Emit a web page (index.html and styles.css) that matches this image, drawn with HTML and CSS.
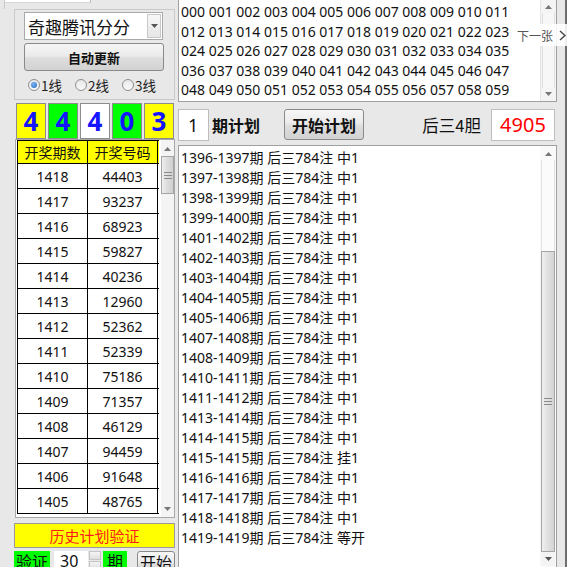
FILE: index.html
```html
<!DOCTYPE html>
<html>
<head>
<meta charset="utf-8">
<link rel="stylesheet" href="styles.css">
</head>
<body>
<div class="app">
  <div class="left">
    <div class="tabstrip"><div class="tab"></div></div>
    <div class="group">
      <div class="combo">
        <span class="combo-text">奇趣腾讯分分</span>
        <span class="combo-btn"><svg width="7" height="4" viewBox="0 0 7 4"><path d="M0 0H7L3.5 4Z" fill="#555"/></svg></span>
      </div>
      <div class="btn btn-auto">自动更新</div>
      <div class="radios">
        <span class="radio"><span class="dot on"></span>1线</span>
        <span class="radio"><span class="dot"></span>2线</span>
        <span class="radio"><span class="dot"></span>3线</span>
      </div>
    </div>
    <div class="digits">
      <div class="digit yellow">4</div>
      <div class="digit green">4</div>
      <div class="digit white">4</div>
      <div class="digit green">0</div>
      <div class="digit yellow">3</div>
    </div>
    <div class="tablebox">
      <div class="table">
        <div class="trow head"><div class="c1">开奖期数</div><div class="c2">开奖号码</div></div>
        <div class="trow"><div class="c1">1418</div><div class="c2">44403</div></div>
        <div class="trow"><div class="c1">1417</div><div class="c2">93237</div></div>
        <div class="trow"><div class="c1">1416</div><div class="c2">68923</div></div>
        <div class="trow"><div class="c1">1415</div><div class="c2">59827</div></div>
        <div class="trow"><div class="c1">1414</div><div class="c2">40236</div></div>
        <div class="trow"><div class="c1">1413</div><div class="c2">12960</div></div>
        <div class="trow"><div class="c1">1412</div><div class="c2">52362</div></div>
        <div class="trow"><div class="c1">1411</div><div class="c2">52339</div></div>
        <div class="trow"><div class="c1">1410</div><div class="c2">75186</div></div>
        <div class="trow"><div class="c1">1409</div><div class="c2">71357</div></div>
        <div class="trow"><div class="c1">1408</div><div class="c2">46129</div></div>
        <div class="trow"><div class="c1">1407</div><div class="c2">94459</div></div>
        <div class="trow"><div class="c1">1406</div><div class="c2">91648</div></div>
        <div class="trow"><div class="c1">1405</div><div class="c2">48765</div></div>
      </div>
      <div class="vscroll small">
        <div class="arrow up"><svg width="7" height="4" viewBox="0 0 7 4"><path d="M0 4H7L3.5 0Z" fill="#777"/></svg></div>
        <div class="thumb small-thumb"><span class="grip"></span></div>
        <div class="track"></div>
        <div class="arrow down"><svg width="7" height="4" viewBox="0 0 7 4"><path d="M0 0H7L3.5 4Z" fill="#777"/></svg></div>
      </div>
    </div>
    <div class="history">历史计划验证</div>
    <div class="bottomrow">
      <div class="greenlabel g1">验证</div>
      <div class="numinput">30</div>
      <div class="spin"><span class="sp"></span><span class="sp"></span></div>
      <div class="greenlabel g2">期</div>
      <div class="btn btn-start">开始</div>
    </div>
  </div>

  <div class="right">
    <div class="textbox">
      <div class="numbers">
        <div>000 001 002 003 004 005 006 007 008 009 010 011</div>
        <div>012 013 014 015 016 017 018 019 020 021 022 023</div>
        <div>024 025 026 027 028 029 030 031 032 033 034 035</div>
        <div>036 037 038 039 040 041 042 043 044 045 046 047</div>
        <div>048 049 050 051 052 053 054 055 056 057 058 059</div>
      </div>
      <div class="vscroll top">
        <div class="arrow up"><svg width="7" height="4" viewBox="0 0 7 4"><path d="M0 4H7L3.5 0Z" fill="#777"/></svg></div>
        <div class="track full"></div>
        <div class="arrow down"><svg width="7" height="4" viewBox="0 0 7 4"><path d="M0 0H7L3.5 4Z" fill="#777"/></svg></div>
      </div>
    </div>
    <div class="controls">
      <div class="periodinput">1</div>
      <div class="plan-label">期计划</div>
      <div class="btn btn-plan">开始计划</div>
      <div class="spacer"></div>
      <div class="dan-label">后三4胆</div>
      <div class="redbox">4905</div>
    </div>
    <div class="listbox">
      <div class="lines">
        <div>1396-1397期 后三784注 中1</div>
        <div>1397-1398期 后三784注 中1</div>
        <div>1398-1399期 后三784注 中1</div>
        <div>1399-1400期 后三784注 中1</div>
        <div>1401-1402期 后三784注 中1</div>
        <div>1402-1403期 后三784注 中1</div>
        <div>1403-1404期 后三784注 中1</div>
        <div>1404-1405期 后三784注 中1</div>
        <div>1405-1406期 后三784注 中1</div>
        <div>1407-1408期 后三784注 中1</div>
        <div>1408-1409期 后三784注 中1</div>
        <div>1410-1411期 后三784注 中1</div>
        <div>1411-1412期 后三784注 中1</div>
        <div>1413-1414期 后三784注 中1</div>
        <div>1414-1415期 后三784注 中1</div>
        <div>1415-1415期 后三784注 挂1</div>
        <div>1416-1416期 后三784注 中1</div>
        <div>1417-1417期 后三784注 中1</div>
        <div>1418-1418期 后三784注 中1</div>
        <div>1419-1419期 后三784注 等开</div>
      </div>
      <div class="vscroll big">
        <div class="arrow up"><svg width="7" height="4" viewBox="0 0 7 4"><path d="M0 4H7L3.5 0Z" fill="#777"/></svg></div>
        <div class="track upper"></div>
        <div class="thumb big-thumb"><span class="grip"></span></div>
        <div class="arrow down"><svg width="7" height="4" viewBox="0 0 7 4"><path d="M0 0H7L3.5 4Z" fill="#555"/></svg></div>
      </div>
    </div>
  </div>

  <div class="edge"></div>

  <div class="nextpic"><span class="nexttext">下一张</span><svg class="chev" width="7" height="11" viewBox="0 0 7 11"><path d="M1 1L6 5.5L1 10" fill="none" stroke="#444" stroke-width="1.4"/></svg></div>
</div>
</body>
</html>
```

FILE: styles.css
```css
* { box-sizing: border-box; }
html, body {
  margin: 0;
  padding: 0;
  width: 567px;
  height: 567px;
  overflow: hidden;
  background: #e8e8e8;
  font-family: "Noto Sans", "Noto Sans CJK SC", sans-serif;
  color: #111;
}
.app {
  position: relative;
  display: flex;
  width: 567px;
  height: 567px;
  overflow: hidden;
}
.left {
  width: 178px;
  flex: none;
  display: flex;
  flex-direction: column;
}
.tabstrip {
  height: 9px;
  flex: none;
  border-left: 1px solid #c8c8c8;
  margin-left: 4px;
}
.tab {
  width: 86px;
  height: 3px;
  background: #fff;
  border-right: 1px solid #b8b8b8;
  border-bottom: 1px solid #d8d8d8;
}
.group {
  margin-left: 14px;
  width: 161px;
  height: 91px;
  border: 1px solid #c9c9c9;
  padding: 2px 0 0 9px;
  flex: none;
}
.combo {
  width: 139px;
  height: 28px;
  background: #fff;
  border: 1px solid #a9a9a9;
  display: flex;
  align-items: center;
  justify-content: space-between;
  padding: 0 1px 0 3px;
}
.combo-text {
  font-size: 17px;
  font-family: "Noto Sans CJK SC", sans-serif;
  line-height: 1;
}
.combo-btn {
  width: 14px;
  height: 24px;
  border: 1px solid #c8c8c8;
  background: linear-gradient(#f7f7f7, #e6e6e6);
  display: flex;
  align-items: center;
  justify-content: center;
}
.btn {
  background: linear-gradient(#f6f6f6 0%, #ebebeb 45%, #dddddd 55%, #d2d2d2 100%);
  border: 1px solid #8a8a8a;
  border-radius: 3px;
  display: flex;
  align-items: center;
  justify-content: center;
  font-family: "Noto Sans CJK SC", sans-serif;
  font-weight: bold;
  color: #111;
}
.btn-auto {
  margin-top: 3px;
  width: 140px;
  height: 28px;
  font-size: 13px;
}
.radios {
  margin-top: 6px;
  display: flex;
  height: 16px;
  align-items: center;
  font-size: 13.5px;
  font-family: "Noto Sans CJK SC", sans-serif;
  padding-left: 4px;
}
.radio {
  display: flex;
  align-items: center;
  margin-right: 13px;
  color: #222;
}
.dot {
  width: 12px;
  height: 12px;
  border-radius: 50%;
  border: 1px solid #8e8e8e;
  background: linear-gradient(#e8e8e8, #fafafa);
  margin-right: 1px;
  display: inline-flex;
  align-items: center;
  justify-content: center;
}
.dot.on::after {
  content: "";
  width: 6px;
  height: 6px;
  border-radius: 50%;
  background: radial-gradient(circle at 40% 35%, #7fb4f0, #1e68c8);
}
.digits {
  margin-top: 3px;
  margin-left: 16px;
  display: flex;
  gap: 2px;
  height: 36px;
  flex: none;
}
.digit {
  width: 30px;
  height: 36px;
  border: 1px solid #8c8c8c;
  display: flex;
  align-items: center;
  justify-content: center;
  font-size: 26px;
  font-weight: bold;
  color: #1414ff;
  font-family: "Open Sans", "Noto Sans", sans-serif;
  line-height: 1;
}
.yellow { background: #ffff00; }
.green { background: #00ff00; }
.white { background: #ffffff; }
.tablebox {
  margin-left: 15px;
  width: 160px;
  height: 379px;
  background: #fff;
  border: 1px solid #a8a8a8;
  display: flex;
  flex: none;
  overflow: hidden;
}
.table {
  width: 142px;
  margin-left: 1px;
  flex: none;
}
.trow {
  display: flex;
  height: 25px;
  border-bottom: 1px solid #000;
  font-size: 14px;
}
.trow.head {
  height: 24px;
  background: #ffff00;
  border-top: 1px solid #000;
  font-family: "Noto Sans CJK SC", sans-serif;
}
.c1, .c2 {
  display: flex;
  align-items: center;
  justify-content: center;
  border-left: 1px solid #000;
}
.c1 { width: 70px; }
.c2 { width: 71px; border-right: 1px solid #000; }
.vscroll {
  display: flex;
  flex-direction: column;
  align-items: center;
  background: #f4f4f4;
}
.vscroll.small {
  margin-left: 2px;
  width: 13px;
  padding-top: 3px;
  padding-bottom: 2px;
}
.arrow {
  width: 100%;
  height: 12px;
  display: flex;
  align-items: center;
  justify-content: center;
  flex: none;
}
.thumb {
  width: 100%;
  border: 1px solid #a5a5a5;
  background: linear-gradient(90deg, #eeeeee, #dcdcdc 50%, #cfcfcf);
  display: flex;
  align-items: center;
  justify-content: center;
  flex: none;
}
.small-thumb { height: 38px; margin-top: 1px; }
.grip {
  width: 8px;
  height: 7px;
  border-top: 1px solid #8a8a8a;
  border-bottom: 1px solid #8a8a8a;
}
.grip::after {
  content: "";
  display: block;
  margin-top: 2px;
  border-top: 1px solid #8a8a8a;
}
.track { flex: 1; width: 100%; }
.history {
  margin-top: 5px;
  margin-left: 14px;
  width: 161px;
  height: 25px;
  background: #ffff00;
  border: 1px solid #9a9a9a;
  color: #ff1a1a;
  font-size: 15px;
  font-family: "Noto Sans CJK SC", sans-serif;
  display: flex;
  align-items: center;
  justify-content: center;
  flex: none;
}
.bottomrow {
  margin-top: 3px;
  margin-left: 14px;
  display: flex;
  height: 24px;
  flex: none;
  font-family: "Noto Sans CJK SC", sans-serif;
}
.greenlabel {
  background: #00ff00;
  height: 24px;
  display: flex;
  align-items: center;
  justify-content: center;
  font-size: 16px;
  padding-bottom: 4px;
}
.g1 { width: 36px; }
.g2 { width: 24px; margin-left: 2px; }
.numinput {
  margin-left: 4px;
  width: 34px;
  height: 24px;
  background: #fff;
  font-size: 16px;
  font-family: "Noto Sans", sans-serif;
  padding: 0 0 4px 6px;
  display: flex;
  align-items: center;
}
.spin {
  width: 12px;
  margin-left: 1px;
  display: flex;
  flex-direction: column;
  gap: 1px;
}
.sp {
  height: 9px;
  background: linear-gradient(#f4f4f4, #dedede);
  border: 1px solid #c4c4c4;
}
.btn-start {
  margin-left: 10px;
  width: 38px;
  height: 26px;
  font-weight: normal;
  font-size: 16px;
  padding-bottom: 4px;
}

.right {
  width: 379px;
  flex: none;
  display: flex;
  flex-direction: column;
}
.textbox {
  height: 102px;
  background: #fff;
  border: 1px solid #a0a0a0;
  border-top: none;
  display: flex;
  flex: none;
}
.numbers {
  flex: 1;
  padding: 2px 0 0 2px;
  font-size: 14px;
  line-height: 19.6px;
  white-space: nowrap;
  overflow: hidden;
}
.vscroll.top {
  width: 16px;
  flex: none;
  padding: 1px;
  border-left: 1px solid #e4e4e4;
}
.vscroll.top .track.full {
  border-left: 1px solid #dedede;
  border-right: 1px solid #dedede;
  background: #f7f7f7;
}
.controls {
  height: 43px;
  flex: none;
  display: flex;
  align-items: center;
  padding-top: 2px;
}
.periodinput {
  width: 31px;
  height: 32px;
  background: #fff;
  border: 1px solid #bdbdbd;
  font-size: 18px;
  display: flex;
  align-items: center;
  padding-left: 9px;
}
.plan-label {
  margin-left: 3px;
  font-size: 16px;
  font-weight: bold;
  font-family: "Noto Sans CJK SC", sans-serif;
}
.btn-plan {
  margin-left: 24px;
  width: 80px;
  height: 31px;
  font-size: 16px;
}
.spacer { flex: 1; }
.dan-label {
  font-size: 16.5px;
  font-family: "Noto Sans CJK SC", sans-serif;
  margin-right: 10px;
}
.redbox {
  width: 64px;
  height: 32px;
  background: #fff;
  border: 1px solid #bdbdbd;
  color: #ff0000;
  font-size: 20px;
  display: flex;
  align-items: center;
  justify-content: center;
  margin-right: 2px;
}
.listbox {
  flex: 1;
  background: #fff;
  border: 1px solid #a0a0a0;
  border-bottom: none;
  display: flex;
  overflow: hidden;
}
.lines {
  flex: 1;
  padding: 2px 0 0 2px;
  font-size: 14px;
  line-height: 20px;
  white-space: nowrap;
}
.vscroll.big {
  width: 16px;
  flex: none;
  padding: 2px 1px 0 1px;
  background: #f9f9f9;
}
.vscroll.big .track.upper {
  flex: none;
  height: 91px;
  border-left: 1px solid #e2e2e2;
  border-right: 1px solid #e2e2e2;
  background: #fbfbfb;
}
.big-thumb {
  height: 301px;
  background: linear-gradient(90deg, #f0f0f0, #e0e0e0 50%, #d4d4d4);
}
.vscroll.big .arrow.down { height: 14px; background: #f4f4f4; }
.edge {
  width: 10px;
  flex: none;
  border-right: 2px solid #6e6e6e;
  margin-right: -2px;
}
.nextpic {
  position: absolute;
  left: 512px;
  right: 0;
  top: 24px;
  height: 22px;
  z-index: 5;
  background: rgba(255, 255, 255, 0.88);
  color: #555;
  font-size: 12px;
  font-family: "Noto Sans CJK SC", sans-serif;
  display: flex;
  align-items: center;
  padding-left: 5px;
}
.nexttext { flex: none; }
.chev {
  flex: none;
  display: block;
  margin-left: 6px;
}
```
